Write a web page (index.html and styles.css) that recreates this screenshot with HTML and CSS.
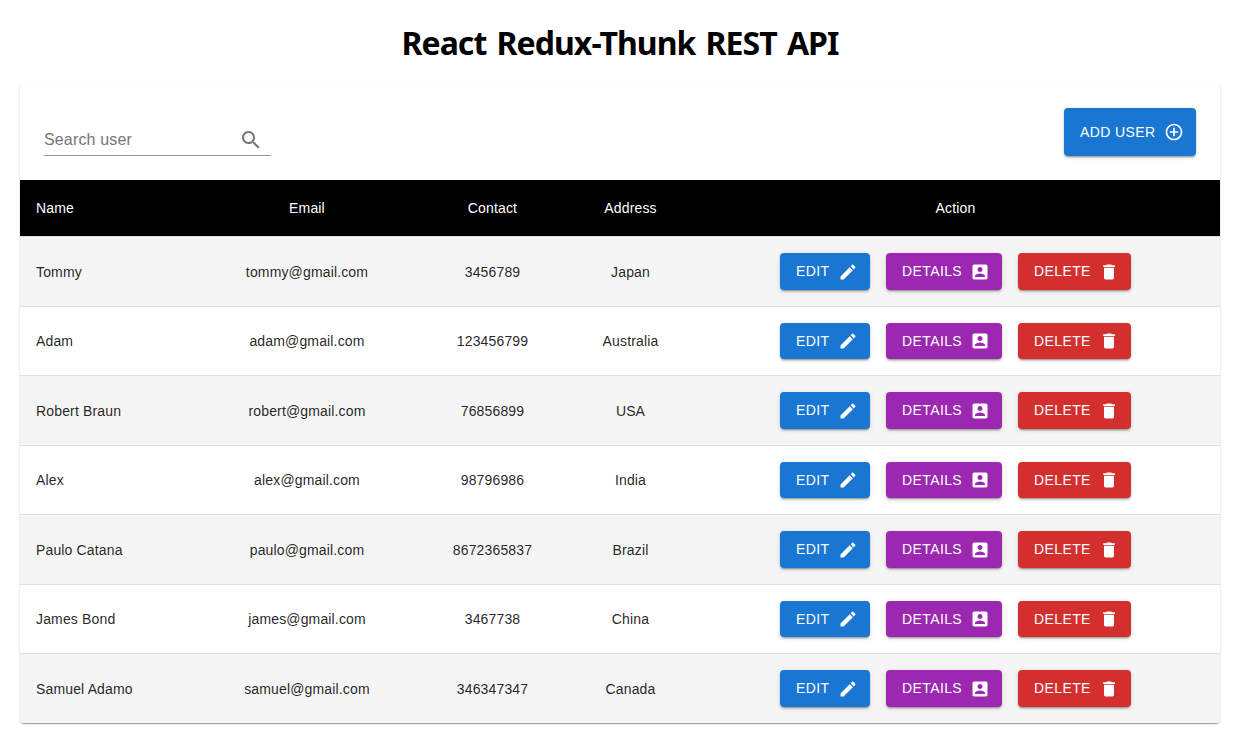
FILE: index.html
```html
<!DOCTYPE html>
<html lang="en">
<head>
<meta charset="utf-8">
<title>React Redux-Thunk REST API</title>
<link rel="stylesheet" href="styles.css">
</head>
<body>
<svg class="sprite" width="0" height="0">
  <symbol id="search" viewBox="0 0 24 24"><path d="M15.5 14h-.79l-.28-.27C15.41 12.59 16 11.11 16 9.5 16 5.91 13.09 3 9.5 3S3 5.91 3 9.5 5.91 16 9.5 16c1.61 0 3.09-.59 4.23-1.57l.27.28v.79l5 4.99L20.49 19l-4.99-5zm-6 0C7.01 14 5 11.99 5 9.5S7.01 5 9.5 5 14 7.01 14 9.5 11.99 14 9.5 14z"/></symbol>
  <symbol id="add" viewBox="0 0 24 24"><path d="M13 7h-2v4H7v2h4v4h2v-4h4v-2h-4V7zm-1-5C6.48 2 2 6.48 2 12s4.48 10 10 10 10-4.48 10-10S17.52 2 12 2zm0 18c-4.41 0-8-3.59-8-8s3.59-8 8-8 8 3.59 8 8-3.59 8-8 8z"/></symbol>
  <symbol id="edit" viewBox="0 0 24 24"><path d="M3 17.25V21h3.75L17.81 9.94l-3.75-3.75L3 17.25zM20.71 7.04c.39-.39.39-1.02 0-1.41l-2.34-2.34a.9959.9959 0 0 0-1.41 0l-1.83 1.83 3.75 3.75 1.83-1.83z"/></symbol>
  <symbol id="details" viewBox="0 0 24 24"><path d="M3 5v14c0 1.1.89 2 2 2h14c1.1 0 2-.9 2-2V5c0-1.1-.9-2-2-2H5c-1.11 0-2 .9-2 2zm12 4c0 1.66-1.34 3-3 3s-3-1.34-3-3 1.34-3 3-3 3 1.34 3 3zm-9 8c0-2 4-3.1 6-3.1s6 1.1 6 3.1v1H6v-1z"/></symbol>
  <symbol id="delete" viewBox="0 0 24 24"><path d="M6 19c0 1.1.9 2 2 2h8c1.1 0 2-.9 2-2V7H6v12zM19 4h-3.5l-1-1h-5l-1 1H5v2h14V4z"/></symbol>
</svg>
<h1 class="title">React Redux-Thunk REST API</h1>
<main class="paper">
  <div class="toolbar">
    <label class="search"><input class="search-input" type="text" placeholder="Search user"><svg class="search-icon"><use href="#search"/></svg></label>
    <button class="btn btn-add">Add user<svg class="icon"><use href="#add"/></svg></button>
  </div>
  <table class="table">
    <colgroup><col class="c-name"><col class="c-email"><col class="c-contact"><col class="c-address"><col></colgroup>
    <thead><tr><th>Name</th><th>Email</th><th>Contact</th><th>Address</th><th>Action</th></tr></thead>
    <tbody id="rows"></tbody>
  </table>
</main>
<script src="app.js"></script>
</body>
</html>
```
FILE: styles.css
```css
* { box-sizing: border-box; }
body { margin: 0; min-height: 100vh; background: #fff; font-family: "Liberation Sans", Arial, sans-serif; color: rgba(0,0,0,.87); }
.sprite { position: absolute; }
.title { margin: 0; padding-top: 21px; height: 84px; width: 1240px; text-align: center; font: 700 32px/44px "Noto Sans", sans-serif; letter-spacing: -.95px; word-spacing: 2.8px; color: #000; }
.paper { width: 1200px; height: 639px; margin-left: 20px; border-radius: 4px; overflow: hidden; background: #fff; box-shadow: 0 2px 1px -1px rgba(0,0,0,.2), 0 1px 1px rgba(0,0,0,.14), 0 1px 3px rgba(0,0,0,.12); }
.toolbar { height: 96px; padding: 24px; display: flex; justify-content: space-between; align-items: flex-start; }
.search { display: flex; align-items: center; width: 227px; height: 32px; margin-top: 16px; border-bottom: 1px solid rgba(0,0,0,.42); }
.search-input { flex: 1; min-width: 0; padding: 0; border: 0; outline: 0; font: 16px/23px "Liberation Sans", Arial, sans-serif; letter-spacing: .15px; }
.search-input::placeholder { color: #757575; opacity: 1; }
.search-icon { width: 24px; height: 24px; margin-right: 8px; fill: #757575; }
.btn { display: inline-flex; align-items: center; justify-content: space-between; height: 36.5px; padding: 0 12px 0 16px; border: 0; border-radius: 4px; color: #fff; font: 14px/24px "Liberation Sans", Arial, sans-serif; letter-spacing: .4px; text-transform: uppercase; white-space: nowrap; box-shadow: 0 3px 1px -2px rgba(0,0,0,.2), 0 2px 2px rgba(0,0,0,.14), 0 1px 5px rgba(0,0,0,.12); }
.icon { width: 20px; height: 20px; fill: currentColor; }
.actions .icon { margin-top: 1px; }
.btn-add, .btn-edit { background: #1976d2; }
.btn-add { width: 132px; height: 48px; }
.btn-edit { width: 90px; }
.btn-details { width: 116px; background: #9c27b0; }
.btn-delete { width: 113px; background: #d32f2f; }
.table { width: 100%; border-collapse: separate; border-spacing: 0; table-layout: fixed; font-size: 14px; letter-spacing: .15px; }
.c-name { width: 194px; }
.c-email { width: 186px; }
.c-contact { width: 185px; }
.c-address { width: 91px; }
.table th { height: 57px; padding: 0; background: #000; background-clip: padding-box; color: #fff; font-weight: 400; border-bottom: 1px solid #e0e0e0; }
.table td { height: 69.5px; padding: 1px 0 0; text-align: center; border-bottom: 1px solid #e0e0e0; }
.table td:last-child { padding-top: 0; }
.table tbody tr:last-child td { border-bottom-color: transparent; }
.table th:first-child, .table td:first-child { text-align: left; padding-left: 16px; }
.table th:last-child, .table td:last-child { padding-left: 15px; }
.table tbody tr:nth-child(odd) { background: #f5f5f5; }
.actions { display: flex; justify-content: center; gap: 16px; }
```
FILE: app.js
```js
const users = [
  ["Tommy", "tommy@gmail.com", "3456789", "Japan"],
  ["Adam", "adam@gmail.com", "123456799", "Australia"],
  ["Robert Braun", "robert@gmail.com", "76856899", "USA"],
  ["Alex", "alex@gmail.com", "98796986", "India"],
  ["Paulo Catana", "paulo@gmail.com", "8672365837", "Brazil"],
  ["James Bond", "james@gmail.com", "3467738", "China"],
  ["Samuel Adamo", "samuel@gmail.com", "346347347", "Canada"]
];
const button = name => `<button class="btn btn-${name}">${name}<svg class="icon"><use href="#${name}"/></svg></button>`;
document.getElementById("rows").innerHTML = users.map(user =>
  `<tr>${user.map(v => `<td>${v}</td>`).join("")}<td><div class="actions">${["edit", "details", "delete"].map(button).join("")}</div></td></tr>`
).join("");
```
